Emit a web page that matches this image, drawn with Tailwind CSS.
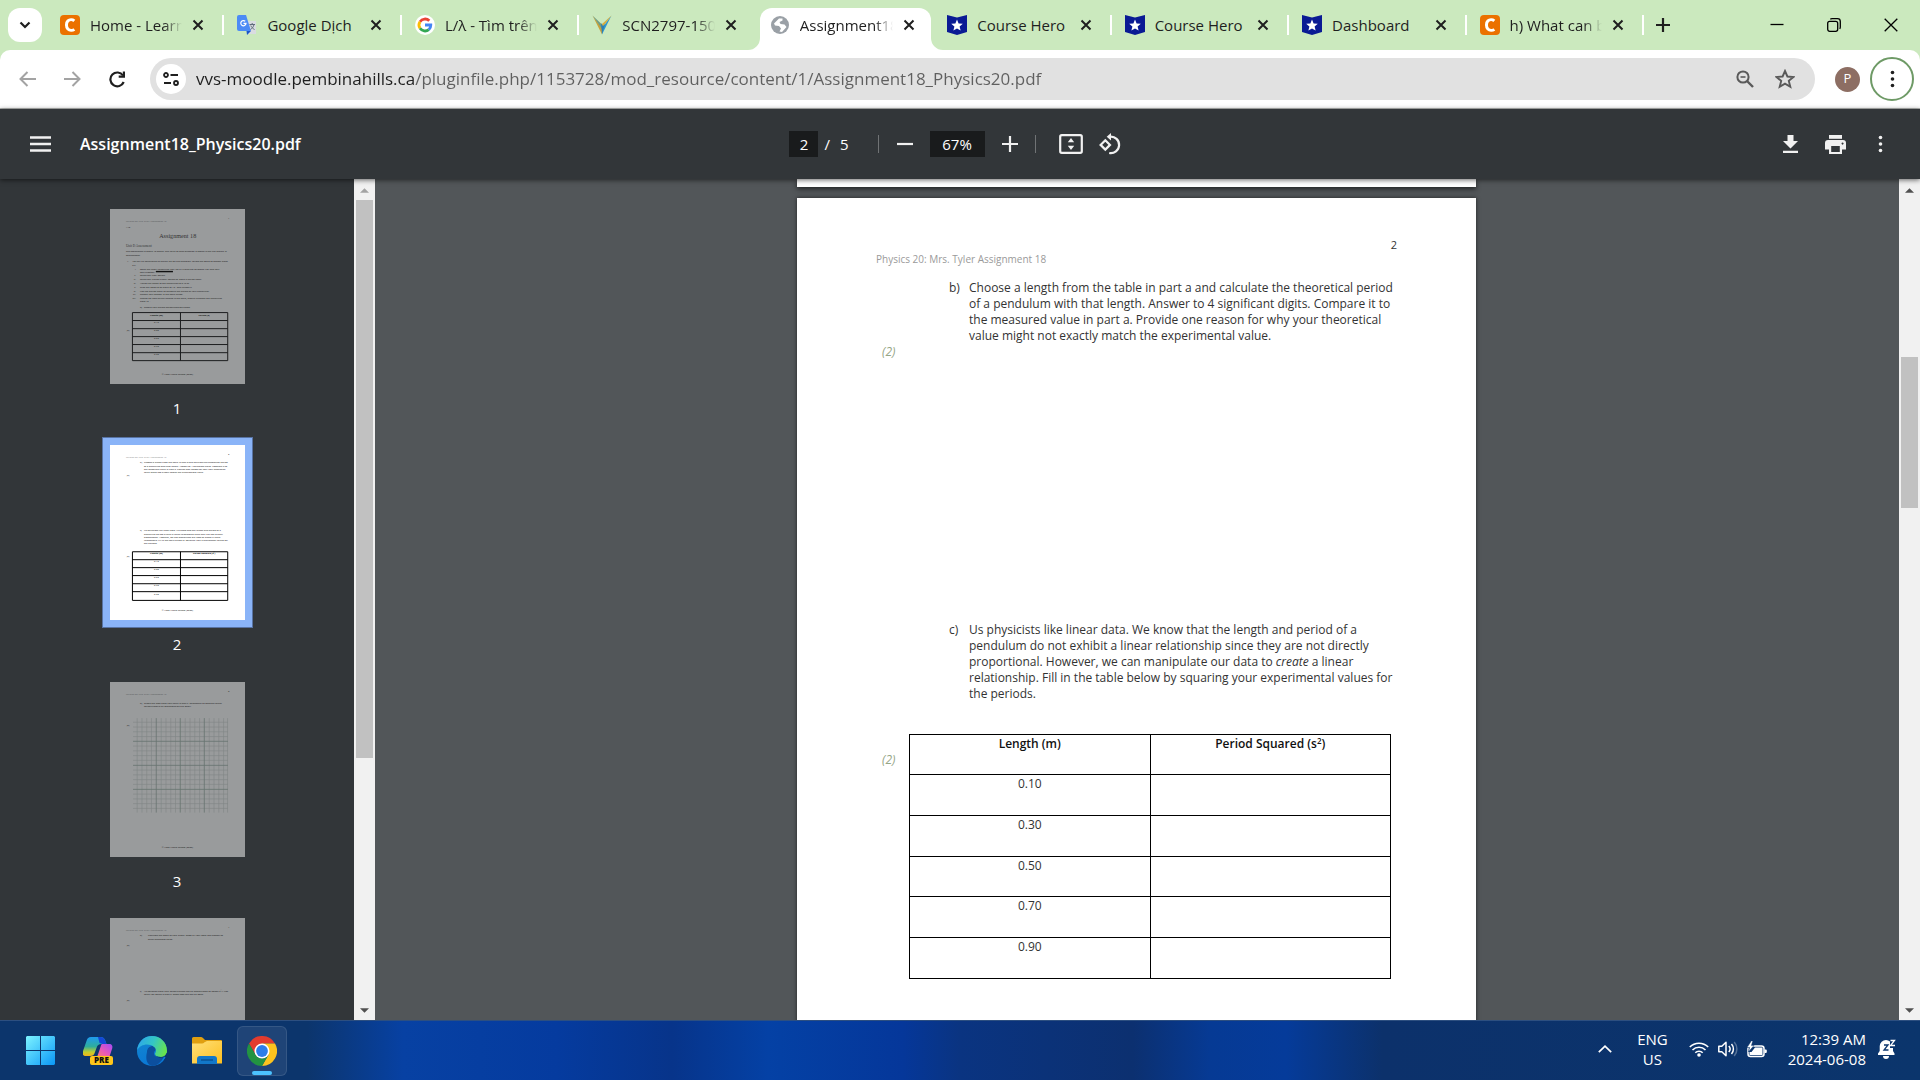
<!DOCTYPE html>
<html lang="en">
<head>
<meta charset="utf-8">
<title>Assignment18_Physics20.pdf</title>
<script src="https://cdn.jsdelivr.net/npm/@tailwindcss/browser@4"></script>
</head>
<body class="flex h-screen flex-col overflow-hidden bg-white font-['Open_Sans','Noto_Sans',sans-serif] text-[#1f1f1f]">

<!-- Shared symbols -->
<svg class="hidden" aria-hidden="true">
  <symbol id="x" viewBox="0 0 12 12"><path d="M1.5 1.5l9 9M10.500 1.500l-9 9" fill="none" stroke="currentColor" stroke-width="2"/></symbol>
  <symbol id="chegg" viewBox="0 0 20 20"><rect width="20" height="20" rx="4" fill="#eb7100"/><path d="M14.300 5.800C12.500 4.300 9.600 4.300 7.900 5.900 6 7.700 6 12 7.900 14c1.700 1.700 4.600 1.800 6.400.3" fill="none" stroke="#fff" stroke-width="3"/></symbol>
  <symbol id="hero" viewBox="0 0 20 20"><path d="M0 0l10 2.500L20 0v17l-10 3-10-3z" fill="#0a1a94"/><path d="M10 4.600l1.600 3.900 4.200.3-3.200 2.700 1 4.100L10 13.400l-3.600 2.200 1-4.100-3.200-2.700 4.200-.3z" fill="#fff"/></symbol>
  <symbol id="up" viewBox="0 0 10 5"><path d="M5 0l5 5H0z" fill="currentColor"/></symbol>
  <symbol id="down" viewBox="0 0 10 5"><path d="M0 0h10L5 5z" fill="currentColor"/></symbol>
  <symbol id="dots" viewBox="0 0 6 22"><circle cx="3" cy="3" r="2.200" fill="currentColor"/><circle cx="3" cy="11" r="2.200" fill="currentColor"/><circle cx="3" cy="19" r="2.200" fill="currentColor"/></symbol>
</svg>

<!-- Tab strip -->
<header class="flex h-[50px] shrink-0 items-center bg-[#cbe9be]">
  <button aria-label="Search tabs" class="ml-2 flex h-[34px] w-[34px] shrink-0 items-center justify-center rounded-xl bg-white"><svg class="h-2 w-3" viewBox="0 0 12 8"><path d="M1.500 1.500L6 6l4.500-4.500" fill="none" stroke="#1f1f1f" stroke-width="2.200"/></svg></button>
  <nav aria-label="Tabs" class="ml-[5px] grid h-[50px] min-w-0 flex-1 grid-cols-9 text-[15px]">
    <div class="flex h-full min-w-0 items-center pl-[13px]">
      <svg class="h-5 w-5 shrink-0"><use href="#chegg"/></svg>
      <a href="#" class="ml-[10px] min-w-0 flex-1 overflow-hidden whitespace-nowrap mask-r-from-80%">Home - Learn</a>
      <button aria-label="Close tab" class="mr-[18px] ml-[10px]"><svg class="h-3 w-3"><use href="#x"/></svg></button>
      <span class="h-5 w-[2px] bg-white"></span>
    </div>
    <div class="flex h-full min-w-0 items-center pl-[13px]">
      <svg class="h-5 w-5 shrink-0" viewBox="0 0 20 20"><path d="M8 6h11v13H11z" fill="#d9dce0"/><path d="M2 0h7l5 16H2a2 2 0 0 1-2-2V2a2 2 0 0 1 2-2z" fill="#4c8bf5"/><path d="M9.500 16H14l-4 4z" fill="#1a56c8"/><path d="M8.200 6.300a2.600 2.600 0 1 0 .8 2.100H6.500" fill="none" stroke="#fff" stroke-width="1.200"/><path d="M12.500 9.500H18M15.200 8v1.500M17 9.500c-.5 2.500-2 4-3.500 5M13.800 10.500c.6 1.700 2 3 3.700 4" fill="none" stroke="#5f6b7a"/></svg>
      <a href="#" class="ml-[10px] min-w-0 flex-1 overflow-hidden whitespace-nowrap">Google Dịch</a>
      <button aria-label="Close tab" class="mr-[18px] ml-[10px]"><svg class="h-3 w-3"><use href="#x"/></svg></button>
      <span class="h-5 w-[2px] bg-white"></span>
    </div>
    <div class="flex h-full min-w-0 items-center pl-[13px]">
      <svg class="h-5 w-5 shrink-0" viewBox="0 0 20 20"><circle cx="10" cy="10" r="10" fill="#fff"/><g fill="none" stroke-width="2.800"><path d="M5 6.700A6 6 0 0 1 14.300 5.800" stroke="#ea4335"/><path d="M5 6.700a6 6 0 0 0 0 6.600" stroke="#fbbc05"/><path d="M5 13.300a6 6 0 0 0 8.800 1.300" stroke="#34a853"/><path d="M13.800 14.600A6 6 0 0 0 15.800 10H10" stroke="#4285f4"/></g></svg>
      <a href="#" class="ml-[10px] min-w-0 flex-1 overflow-hidden whitespace-nowrap mask-r-from-80%">L/λ - Tìm trên</a>
      <button aria-label="Close tab" class="mr-[18px] ml-[10px]"><svg class="h-3 w-3"><use href="#x"/></svg></button>
      <span class="h-5 w-[2px] bg-white"></span>
    </div>
    <div class="flex h-full min-w-0 items-center pl-[13px]">
      <svg class="h-5 w-5 shrink-0" viewBox="0 0 20 20"><path d="M.5.5L10 19.500V13z" fill="#c9a13b"/><path d="M.5.500L10 9.500V14z" fill="#6d9c86"/><path d="M19.500.5L10 19.500V13z" fill="#2f97d1"/><path d="M19.500.500L10 9V13z" fill="#d8ad3e"/><path d="M9 8l1 11 3-10-2 2z" fill="#2f7fae"/></svg>
      <a href="#" class="ml-[10px] min-w-0 flex-1 overflow-hidden whitespace-nowrap mask-r-from-80%">SCN2797-150</a>
      <button aria-label="Close tab" class="mr-5 ml-[10px]"><svg class="h-3 w-3"><use href="#x"/></svg></button>
    </div>
    <div class="h-full min-w-0 px-[3px] pt-2">
      <div class="relative flex h-[42px] items-center rounded-t-xl bg-white pb-2 pl-[10px]">
        <svg class="absolute bottom-0 -left-3 h-3 w-3" viewBox="0 0 12 12"><path d="M12 0v12H0A12 12 0 0 0 12 0z" fill="#fff"/></svg>
        <svg class="absolute -right-3 bottom-0 h-3 w-3" viewBox="0 0 12 12"><path d="M0 0v12h12A12 12 0 0 1 0 0z" fill="#fff"/></svg>
        <svg class="h-5 w-5 shrink-0" viewBox="0 0 20 20"><circle cx="10" cy="10" r="9" fill="#9aa0a6"/><path d="M9 3.500L4 8.500l1 2 4 .5 2 2.500-1.500 3L12 17l4.500-5-2-2.500-4-.5-1-2 3-1.500V3.500z" fill="#fff"/></svg>
        <a href="#" aria-current="page" class="ml-[10px] min-w-0 flex-1 overflow-hidden whitespace-nowrap mask-r-from-80%">Assignment18</a>
        <button aria-label="Close tab" class="mr-4 ml-[10px]"><svg class="h-3 w-3"><use href="#x"/></svg></button>
      </div>
    </div>
    <div class="flex h-full min-w-0 items-center pl-[13px]">
      <svg class="h-5 w-5 shrink-0"><use href="#hero"/></svg>
      <a href="#" class="ml-[10px] min-w-0 flex-1 overflow-hidden whitespace-nowrap">Course Hero</a>
      <button aria-label="Close tab" class="mr-[18px] ml-[10px]"><svg class="h-3 w-3"><use href="#x"/></svg></button>
      <span class="h-5 w-[2px] bg-white"></span>
    </div>
    <div class="flex h-full min-w-0 items-center pl-[13px]">
      <svg class="h-5 w-5 shrink-0"><use href="#hero"/></svg>
      <a href="#" class="ml-[10px] min-w-0 flex-1 overflow-hidden whitespace-nowrap">Course Hero</a>
      <button aria-label="Close tab" class="mr-[18px] ml-[10px]"><svg class="h-3 w-3"><use href="#x"/></svg></button>
      <span class="h-5 w-[2px] bg-white"></span>
    </div>
    <div class="flex h-full min-w-0 items-center pl-[13px]">
      <svg class="h-5 w-5 shrink-0"><use href="#hero"/></svg>
      <a href="#" class="ml-[10px] min-w-0 flex-1 overflow-hidden whitespace-nowrap">Dashboard</a>
      <button aria-label="Close tab" class="mr-[18px] ml-[10px]"><svg class="h-3 w-3"><use href="#x"/></svg></button>
      <span class="h-5 w-[2px] bg-white"></span>
    </div>
    <div class="flex h-full min-w-0 items-center pl-[13px]">
      <svg class="h-5 w-5 shrink-0"><use href="#chegg"/></svg>
      <a href="#" class="ml-[10px] min-w-0 flex-1 overflow-hidden whitespace-nowrap mask-r-from-80%">h) What can b</a>
      <button aria-label="Close tab" class="mr-[18px] ml-[10px]"><svg class="h-3 w-3"><use href="#x"/></svg></button>
      <span class="h-5 w-[2px] bg-white"></span>
    </div>
  </nav>
  <button aria-label="New tab" class="ml-3"><svg class="h-[14px] w-[14px]" viewBox="0 0 14 14"><path d="M7 0v14M0 7h14" stroke="#1f1f1f" stroke-width="2.200"/></svg></button>
  <div class="mr-px ml-[78px] flex shrink-0 text-black">
    <button aria-label="Minimize" class="flex w-[57px] items-center justify-center"><svg class="h-[14px] w-[14px]" viewBox="0 0 14 14"><path d="M.5 6.500h13" stroke="currentColor" stroke-width="1.300"/></svg></button>
    <button aria-label="Restore" class="flex w-[57px] items-center justify-center"><svg class="h-[14px] w-[14px]" viewBox="0 0 14 14"><g fill="none" stroke="currentColor" stroke-width="1.300"><rect x=".7" y="3.300" width="10" height="10" rx="2"/><path d="M3.300 1.200Q4 .7 5 .7h5.500a2.800 2.800 0 0 1 2.800 2.800V9q0 1-.6 1.800"/></g></svg></button>
    <button aria-label="Close" class="flex w-[57px] items-center justify-center"><svg class="h-[14px] w-[14px]" viewBox="0 0 14 14"><path d="M.7.700l12.600 12.600M13.300.7L.7 13.300" stroke="currentColor" stroke-width="1.300"/></svg></button>
  </div>
</header>

<!-- Address bar -->
<div class="h-[59px] shrink-0 border-b border-[#b8bab8] bg-[#cbe9be]">
  <div class="flex h-full items-center rounded-t-[10px] bg-white pr-[6px] pl-[19px]">
    <button aria-label="Back"><svg class="h-4 w-[17px]" viewBox="0 0 17 16"><path d="M17 8H2M8.500 1l-7 7 7 7" fill="none" stroke="#a3a3a3" stroke-width="2"/></svg></button>
    <button aria-label="Forward" class="ml-7"><svg class="h-4 w-[17px]" viewBox="0 0 17 16"><path d="M0 8h15M8.500 1l7 7-7 7" fill="none" stroke="#a3a3a3" stroke-width="2"/></svg></button>
    <button aria-label="Reload" class="ml-7"><svg class="h-[17px] w-[17px]" viewBox="0 0 17 17"><path d="M14.700 11A6.900 6.900 0 1 1 14 4.500" fill="none" stroke="#1f1f1f" stroke-width="2.200"/><path d="M16 .5v6.300H9.700V4.600h4.100V.5z" fill="#1f1f1f"/></svg></button>
    <div class="ml-6 flex h-[42px] min-w-0 flex-1 items-center rounded-full bg-[#e1e1e1] pr-5 pl-[6px]">
      <button aria-label="View site information" class="flex h-[30px] w-[30px] shrink-0 items-center justify-center rounded-full bg-white"><svg class="h-[14px] w-4" viewBox="0 0 16 14"><g fill="none" stroke="#1f1f1f" stroke-width="1.800"><circle cx="3" cy="3" r="2"/><path d="M7.500 3H15M1 11h7"/><circle cx="13" cy="11" r="2"/></g></svg></button>
      <!-- The gradient darkens the host name only -->
      <input aria-label="Address" value="vvs-moodle.pembinahills.ca/pluginfile.php/1153728/mod_resource/content/1/Assignment18_Physics20.pdf" class="ml-[10px] min-w-0 flex-1 bg-[linear-gradient(90deg,#1f1f1f_218px,#5f5f5f_218px)] bg-clip-text text-[17px] text-transparent">
      <button aria-label="Zoom"><svg class="h-[18px] w-[18px]" viewBox="0 0 18 18"><g fill="none" stroke="#5a5a5a"><circle cx="7" cy="7" r="5.600" stroke-width="2"/><path d="M11 11l6 6" stroke-width="2.400"/><path d="M4.500 7h5" stroke-width="1.600"/></g></svg></button>
      <button aria-label="Bookmark this tab" class="ml-[21px]"><svg class="h-5 w-5" viewBox="0 0 20 20"><path d="M10 2l2.400 5.500 6 .5-4.600 3.900 1.500 5.900-5.300-3.200-5.300 3.200 1.500-5.900L1.600 8l6-.5z" fill="none" stroke="#5a5a5a" stroke-width="1.900"/></svg></button>
    </div>
    <button aria-label="Profile" class="ml-5 flex h-[25px] w-[25px] items-center justify-center rounded-full bg-[#8d6e63] text-[13px] text-white">P</button>
    <button aria-label="Menu" class="ml-[10px] flex h-11 w-11 items-center justify-center rounded-full border-2 border-[#6e9a66]"><svg class="h-[18px] w-[5px]"><use href="#dots"/></svg></button>
  </div>
</div>

<!-- PDF viewer toolbar -->
<div class="relative z-10 grid h-[70px] shrink-0 grid-cols-3 items-center bg-[#323639] text-white shadow-[0_1px_5px_rgba(0,0,0,0.6)]">
  <div class="flex items-center pl-[30px]">
    <button aria-label="Menu"><svg class="h-[16px] w-[21px]" viewBox="0 0 21 16"><path d="M0 1.500h21M0 8h21M0 14.500h21" stroke="#f1f1f1" stroke-width="2.400"/></svg></button>
    <span class="ml-[29px] text-[16px] font-semibold">Assignment18_Physics20.pdf</span>
  </div>
  <div class="flex items-center justify-center pr-[10px] text-[15px]">
    <input aria-label="Page number" value="2" class="h-[26px] w-[29px] bg-[#191b1c] text-center text-white">
    <span class="ml-[6px]">/</span><span class="ml-[10px]">5</span>
    <span class="ml-[29px] h-[18px] w-px bg-[#707375]"></span>
    <button aria-label="Zoom out" class="ml-[18px]"><svg class="h-4 w-4" viewBox="0 0 16 16"><path d="M0 8h16" stroke="#f1f1f1" stroke-width="2.200"/></svg></button>
    <input aria-label="Zoom level" value="67%" class="ml-[17px] h-[26px] w-[55px] bg-[#191b1c] text-center text-white">
    <button aria-label="Zoom in" class="ml-[17px]"><svg class="h-4 w-4" viewBox="0 0 16 16"><path d="M0 8h16M8 0v16" stroke="#f1f1f1" stroke-width="2.200"/></svg></button>
    <span class="ml-[17px] h-[18px] w-px bg-[#707375]"></span>
    <button aria-label="Fit to page" class="ml-[23px]"><svg class="h-5 w-6" viewBox="0 0 24 20"><rect x="1.200" y="1.200" width="21.600" height="17.600" rx="1.500" fill="none" stroke="#f1f1f1" stroke-width="2.200"/><path d="M12 4l3.200 4.300H8.800zM12 16l3.200-4.300H8.800z" fill="#f1f1f1"/></svg></button>
    <button aria-label="Rotate" class="ml-4"><svg class="h-[22px] w-[22px]" viewBox="0 0 22 22"><g fill="none" stroke="#f1f1f1" stroke-width="2.200"><path d="M6.300 7.200l4.700 4.700-4.700 4.700-4.700-4.700z"/><path d="M11 3.600a8.300 8.300 0 1 1-.8 16.400"/></g><path d="M12 0v7.400L7.700 3.700z" fill="#f1f1f1"/></svg></button>
  </div>
  <div class="flex items-center justify-end pr-[37px]">
    <button aria-label="Download"><svg class="h-[18px] w-[15px]" viewBox="0 0 15 18"><path d="M4.500 0h6v6H15l-7.500 7.500L0 6h4.500zM0 15.700h15V18H0z" fill="#f1f1f1"/></svg></button>
    <button aria-label="Print" class="ml-[27px]"><svg class="h-[19px] w-[21px]" viewBox="0 0 21 19"><path d="M4 0h13v3.800H4z" fill="#f1f1f1"/><path d="M3 5h15a3 3 0 0 1 3 3v6.500h-4V19H4v-4.500H0V8a3 3 0 0 1 3-3zm3.200 6v6h8.600v-6zM17.500 7.400a1 1 0 1 0 .1 0z" fill="#f1f1f1" fill-rule="evenodd"/></svg></button>
    <button aria-label="More actions" class="ml-8"><svg class="h-[18px] w-[5px] text-[#f1f1f1]"><use href="#dots"/></svg></button>
  </div>
</div>

<div class="flex min-h-0 flex-1 bg-[#525659]">
  <!-- Thumbnails -->
  <aside class="flex w-[354px] shrink-0 flex-col items-center overflow-hidden bg-[#323639] pt-[30px] text-[15px] leading-5 text-white">
    <a href="#" class="flex shrink-0 flex-col items-center">
      <svg class="h-[175px] w-[135px] bg-[#999b9c]" viewBox="0 0 680 880" fill="#111" font-family="Open Sans, sans-serif" font-size="12">
        <text x="80" y="66" fill="#55585a">Physics 20: Mrs. Tyler Assignment 18</text><text x="594" y="52">1</text><text x="80" y="96">/ 43</text>
        <text x="341" y="143" font-family="Liberation Serif, serif" font-size="31" fill="#333" text-anchor="middle">Assignment 18</text>
        <text x="80" y="192" font-family="Liberation Serif, serif" font-size="17" fill="#333">Unit D Assessment</text>
        <text x="80" y="217">The assignment is worth 43 marks. The value of each question is stated in the left margin in</text><text x="80" y="237">parentheses.</text>
        <text x="86" y="267">1.</text><text x="112" y="267">You will be conducting an online lab for this question. Follow the steps to answer parts</text><text x="112" y="287">a-c.</text>
        <text x="126" y="307">i.</text><text x="151" y="307">Open the PhET “Pendulum Lab” lab by typing the following link into your</text><text x="151" y="320">web browser:</text><path d="M231 311h86v7h-86z"/>
        <text x="122" y="338">ii.</text><text x="151" y="338">Select the “Lab” option.</text><text x="119" y="358">iii.</text><text x="151" y="358">Select the “Period Timer” option to insert a period timer.</text>
        <text x="119" y="378">iv.</text><text x="151" y="378">Adjust the length of the pendulum to 0.10 m.</text><text x="122" y="398">v.</text><text x="151" y="398">Drag the mass to an angle of 10° and release it.</text>
        <text x="119" y="418">vi.</text><text x="151" y="418">Use the period timer to measure the period of your pendulum.</text><text x="116" y="433">vii.</text><text x="151" y="433">Record your answer in the table below.</text>
        <text x="113" y="453">viii.</text><text x="151" y="453">Repeat for each of the lengths in the table, always releasing the pendulum</text><text x="151" y="468">from 10°.</text>
        <text x="151" y="497">a)</text><text x="171" y="497">Record your period measurements below.</text>
        <path d="M113 521h480v242H113zM355 521v242M113 561h480M113 602h480M113 642h480M113 682h480M113 723h480" fill="none" stroke="#1b1c1d" stroke-width="5"/>
        <g text-anchor="middle"><text x="234" y="536" font-weight="700">Length (m)</text><text x="474" y="536" font-weight="700">Period (s)</text><text x="234" y="574">0.10</text><text x="234" y="614">0.30</text><text x="234" y="655">0.50</text><text x="234" y="695">0.70</text><text x="234" y="736">0.90</text><text x="339" y="836">© Vista Virtual School (2020)</text></g><text x="84" y="612">(2)</text>
      </svg>
      <span class="mt-[14px]">1</span>
    </a>
    <a href="#" aria-current="page" class="mt-[19px] flex shrink-0 flex-col items-center">
      <span class="border border-[#5873a3] bg-[#8ab4f8] p-[7px]"><svg class="h-[175px] w-[135px] bg-white" viewBox="0 0 680 880" fill="#000" font-family="Open Sans, sans-serif" font-size="12">
        <text x="80" y="66" fill="#888">Physics 20: Mrs. Tyler Assignment 18</text><text x="594" y="52">2</text>
        <text x="151" y="90">b)</text><text x="171" y="90">Choose a length from the table in part a and calculate the theoretical period</text><text x="171" y="109">of a pendulum with that length. Answer to 4 significant digits. Compare it to</text><text x="171" y="125">the measured value in part a. Provide one reason for why your theoretical</text><text x="171" y="140">value might not exactly match the experimental value.</text>
        <text x="84" y="155">(2)</text><text x="84" y="562">(2)</text>
        <text x="151" y="432">c)</text><text x="171" y="432">Us physicists like linear data. We know that the length and period of a</text><text x="171" y="452">pendulum do not exhibit a linear relationship since they are not directly</text><text x="171" y="467">proportional. However, we can manipulate our data to create a linear</text><text x="171" y="482">relationship. Fill in the table below by squaring your experimental values for</text><text x="171" y="497">the periods.</text>
        <path d="M113 537h480v245H113zM355 537v245M113 577h480M113 617h480M113 657h480M113 698h480M113 738h480" fill="none" stroke="#000" stroke-width="5"/>
        <g text-anchor="middle"><text x="234" y="550" font-weight="700">Length (m)</text><text x="474" y="550" font-weight="700">Period Squared (s²)</text><text x="234" y="590">0.10</text><text x="234" y="630">0.30</text><text x="234" y="671">0.50</text><text x="234" y="711">0.70</text><text x="234" y="755">0.90</text><text x="339" y="836">© Vista Virtual School (2020)</text></g>
      </svg></span>
      <span class="mt-[6px]">2</span>
    </a>
    <a href="#" class="mt-7 flex shrink-0 flex-col items-center">
      <svg class="h-[175px] w-[135px] bg-[#999b9c]" viewBox="0 0 680 880" fill="#111" font-family="Open Sans, sans-serif" font-size="12">
        <text x="80" y="66" fill="#55585a">Physics 20: Mrs. Tyler Assignment 18</text><text x="594" y="52">3</text>
        <text x="151" y="110">d)</text><text x="171" y="110">Graph the data from your table in part c. Remember to consider which</text><text x="171" y="126">variable would be dependent on the other.</text><text x="84" y="222">(2)</text>
        <path d="M137 181v476M161 181v476M185 181v476M209 181v476M258 181v476M282 181v476M306 181v476M330 181v476M379 181v476M403 181v476M427 181v476M451 181v476M500 181v476M524 181v476M548 181v476M572 181v476M592 181v476M116 202h478M116 226h478M116 250h478M116 274h478M116 322h478M116 346h478M116 370h478M116 394h478M116 443h478M116 467h478M116 491h478M116 515h478M116 564h478M116 588h478M116 612h478M116 636h478" fill="none" stroke="#808586" stroke-width="3"/>
        <path d="M233 181v476M354 181v476M475 181v476M116 298h478M116 419h478M116 540h478" fill="none" stroke="#66736f" stroke-width="4"/>
        <text x="339" y="836" text-anchor="middle">© Vista Virtual School (2020)</text>
      </svg>
      <span class="mt-[14px]">3</span>
    </a>
    <a href="#" aria-label="Page 4" class="mt-[27px] flex shrink-0 flex-col items-center">
      <svg class="h-[175px] w-[135px] bg-[#999b9c]" viewBox="0 0 680 880" fill="#111" font-family="Open Sans, sans-serif" font-size="12">
        <text x="80" y="66" fill="#55585a">Physics 20: Mrs. Tyler Assignment 18</text><text x="594" y="52">4</text>
        <text x="151" y="90">e)</text><text x="191" y="90">Calculate the slope of your graph. Show all your work and answer to</text><text x="191" y="110">three significant digits.</text><text x="84" y="141">(2)</text>
        <text x="151" y="372">f)</text><text x="171" y="372">An equation from your formula sheet can be manipulated to isolate T²/l. Use</text><text x="171" y="387">value you found in part e. Show how this can be done.</text><text x="84" y="418">(2)</text>
      </svg>
    </a>
  </aside>
  <div class="flex w-[21px] shrink-0 flex-col items-center bg-[#f1f1f1] pb-[7px]">
    <svg class="mt-[9px] h-[5px] w-[9px] text-[#a3a3a3]"><use href="#up"/></svg>
    <span class="mt-[7px] w-[17px] flex-[557] bg-[#c1c1c1]"></span>
    <span class="flex-[250]"></span>
    <svg class="h-[5px] w-[9px] text-[#505050]"><use href="#down"/></svg>
  </div>

  <!-- Document -->
  <main class="flex min-w-0 flex-1 flex-col items-center overflow-hidden pr-[1px] text-[12px] leading-4 text-[#333]">
    <div class="h-2 w-[679px] shrink-0 bg-white shadow-[0_2px_5px_rgba(0,0,0,0.6)]"></div>
    <article class="mt-[11px] h-[879px] w-[679px] shrink-0 bg-white pt-[39px] pr-[79px] pl-[79px] shadow-[0_0_4px_rgba(0,0,0,0.6)]">
      <p class="text-right text-[11px]">2</p>
      <p class="-mt-[2px] text-[10px] font-medium text-[#9a9a9a]">Physics 20: Mrs. Tyler Assignment 18</p>
      <div class="mt-[13px] flex whitespace-nowrap">
        <p class="flex w-[73px] items-end pl-[6px] text-[#95a586] italic"><span class="-mb-4">(2)</span></p>
        <p class="w-5">b)</p>
        <p>Choose a length from the table in part a and calculate the theoretical period<br>of a pendulum with that length. Answer to 4 significant digits. Compare it to<br>the measured value in part a. Provide one reason for why your theoretical<br>value might not exactly match the experimental value.</p>
      </div>
      <div class="mt-[278px] flex pl-[73px] whitespace-nowrap">
        <p class="w-5">c)</p>
        <p>Us physicists like linear data. We know that the length and period of a<br>pendulum do not exhibit a linear relationship since they are not directly<br>proportional. However, we can manipulate our data to <em>create</em> a linear<br>relationship. Fill in the table below by squaring your experimental values for<br>the periods.</p>
      </div>
      <div class="mt-8 flex">
        <p class="w-[33px] shrink-0 pt-[18px] pl-[6px] text-[#95a586] italic">(2)</p>
        <table class="-mr-3 h-[245px] w-[482px] shrink-0 table-fixed border-collapse text-center [&_td]:border [&_td]:border-black [&_td]:pt-px [&_td]:align-top [&_th]:border [&_th]:border-black [&_th]:pt-px [&_th]:align-top [&_th]:font-semibold [&_th]:text-[#111]">
          <thead><tr class="h-10"><th>Length (m)</th><th>Period Squared (s<sup class="text-[8px]">2</sup>)</th></tr></thead>
          <tbody>
            <tr class="h-10"><td>0.10</td><td></td></tr>
            <tr class="h-10"><td>0.30</td><td></td></tr>
            <tr class="h-10"><td>0.50</td><td></td></tr>
            <tr class="h-10"><td>0.70</td><td></td></tr>
            <tr class="h-10"><td>0.90</td><td></td></tr>
          </tbody>
        </table>
      </div>
    </article>
  </main>
  <div class="flex w-[21px] shrink-0 flex-col items-center bg-[#f1f1f1] pb-[7px] text-[#505050]">
    <svg class="mt-[9px] h-[5px] w-[9px]"><use href="#up"/></svg>
    <span class="flex-[164]"></span>
    <span class="w-[17px] flex-[151] bg-[#c1c1c1]"></span>
    <span class="flex-[500]"></span>
    <svg class="h-[5px] w-[9px]"><use href="#down"/></svg>
  </div>
</div>

<!-- Taskbar -->
<footer class="flex h-[60px] shrink-0 items-center border-t border-[#2d4f80] bg-[linear-gradient(90deg,#0c356c_0%,#0c356c_16%,#0741a3_21%,#053b9f_29%,#07348a_35%,#0441a5_40%,#05379a_47%,#0a3481_50%,#0c3070_59%,#063a94_63%,#053b9a_67%,#0c316b_72%,#0b356c_100%)] pr-6 pl-[26px] text-white">
  <button aria-label="Start"><svg class="h-[29px] w-[29px]" viewBox="0 0 29 29"><defs><linearGradient id="win" x1="0" y1="0" x2="29" y2="29" gradientUnits="userSpaceOnUse"><stop stop-color="#7df3ff"/><stop offset="1" stop-color="#0a97f7"/></linearGradient></defs><path d="M1 0h13v14H0V1zM15 0h13l1 1v13H15zM0 15h14v14H1l-1-1zM15 15h14v13l-1 1H15z" fill="url(#win)"/></svg></button>
  <button aria-label="Copilot" class="ml-7"><svg class="h-[29px] w-[30px]" viewBox="0 0 30 29"><defs><linearGradient id="cpa" x1="0" y1="0" x2="0" y2="1"><stop stop-color="#1f9af0"/><stop offset=".5" stop-color="#2fae9c"/><stop offset=".8" stop-color="#c5cf2c"/><stop offset="1" stop-color="#f2b21b"/></linearGradient><linearGradient id="cpb" x1="1" y1="0" x2="0" y2="1"><stop stop-color="#a54af5"/><stop offset=".5" stop-color="#e958b8"/><stop offset="1" stop-color="#ff8a5c"/></linearGradient></defs><path d="M8 1h9c3 0 4 1 5 3l1.500 4h-5c-3 0-4 1-5 4l-1.500 4c-1 3-2 4-5 4H3c-3 0-4-2-3-5L3.500 5C4.500 2 5.500 1 8 1z" fill="url(#cpa)"/><path d="M15 1h2c3 0 4 1 5 3l1.500 4h-4l-3-1z" fill="#1447d6"/><path d="M19 8h7c3 0 4 2 3 5l-3 9H11c3 0 3.500-2 4.500-5l2-6c.5-2 1-3 1.500-3z" fill="url(#cpb)"/><rect x="7" y="20" width="23" height="9" rx="2" fill="#ffc61a"/><text x="18.500" y="27.300" text-anchor="middle" font-family="Open Sans, sans-serif" font-size="8" font-weight="800" fill="#111">PRE</text></svg></button>
  <button aria-label="Edge" class="ml-6"><svg class="h-[30px] w-[30px]" viewBox="0 0 30 30"><defs><linearGradient id="eda" x1="0" y1=".3" x2="1" y2=".6"><stop stop-color="#2da6ea"/><stop offset=".5" stop-color="#34c6c4"/><stop offset="1" stop-color="#69e34a"/></linearGradient><linearGradient id="edb" x1="0" y1="0" x2=".3" y2="1"><stop stop-color="#1487cf"/><stop offset="1" stop-color="#0a78d6"/></linearGradient></defs><circle cx="15" cy="15" r="15" fill="url(#edb)"/><path d="M10 16c0-4 3-6 6-6 2 0 3 1 3 3 0 1-2 2-2 4 0 4 5 6 10 3.500C24 27 19 30 15 30 8 28 9 20 10 16z" fill="#0c4f9e"/><path d="M30 15c0 4-3 6-6 6-4 0-6-1-6-3 0-1 1-1.500 1-3.500 0-3-4-6-9-6-4 0-8 2-10 6C1 6 7 0 15 0s15 6 15 15z" fill="url(#eda)"/><path d="M18 18c0 3 5 5 9 3 1-.5 2 0 1.500 1-.5.700-1 1.500-1.500 2l6 6V18l-3.500-1c-1 3-3.500 4-5.500 4-4 0-6-1-6-3z" fill="#0c346c"/></svg></button>
  <button aria-label="File Explorer" class="ml-[25px]"><svg class="h-[28px] w-[30px]" viewBox="0 0 30 28"><defs><linearGradient id="fol" x1="0" y1="0" x2="1" y2="1"><stop stop-color="#ffe07a"/><stop offset="1" stop-color="#fdbf1f"/></linearGradient></defs><path d="M0 1.500Q0 0 1.500 0H9q1 0 2 1l2 2h16q1 0 1 1v6H0z" fill="#e09f10"/><path d="M0 6.500h10q1.500 0 2.500-1.200L15 4h15v22.500H0z" fill="url(#fol)"/><path d="M5 27v-5q0-3 3-3h14q3 0 3 3v5z" fill="#1277c9"/><path d="M9 23h12" stroke="#0a4f91" stroke-width="1.400"/></svg></button>
  <button aria-label="Chrome" class="ml-[15px] flex h-[50px] w-[50px] flex-col items-center rounded-md border border-white/10 bg-white/8 pt-[9px]"><svg class="h-[30px] w-[30px]" viewBox="0 0 30 30"><path d="M2 7.500A15 15 0 0 1 28 7.500H15L8.500 18.800z" fill="#e23b2e"/><path d="M28 7.500A15 15 0 0 1 15 30l6.500-11.300L15 7.500z" fill="#fcc31e"/><path d="M15 30A15 15 0 0 1 2 7.500l6.500 11.300A7.500 7.500 0 0 0 21.500 18.700z" fill="#229342"/><circle cx="15" cy="15" r="7.500" fill="#fff"/><circle cx="15" cy="15" r="5.900" fill="#2b7de9"/></svg><span class="mt-[5px] h-1 w-5 shrink-0 rounded-full bg-[#4cc2ff]"></span></button>
  <div class="ml-auto flex items-center pb-[3px] text-[15px] leading-5">
    <button aria-label="Show hidden icons"><svg class="h-2 w-[14px]" viewBox="0 0 14 8"><path d="M.8 7.200L7 1.200l6.200 6" fill="none" stroke="#fff" stroke-width="1.700"/></svg></button>
    <button aria-label="Input language" class="ml-[25px] text-center">ENG<br>US</button>
    <button aria-label="Network, sound and battery" class="ml-[21px] flex items-center gap-[9px]">
      <svg class="h-4 w-5" viewBox="0 0 20 16"><g fill="none" stroke="#fff" stroke-width="1.600"><path d="M.8 6a13 13 0 0 1 18.400 0M3.500 9a9.200 9.200 0 0 1 13 0M6.300 11.800a5.200 5.200 0 0 1 7.400 0"/></g><circle cx="10" cy="14" r="1.800" fill="#fff"/></svg>
      <svg class="h-4 w-5" viewBox="0 0 20 16"><g fill="none" stroke="#fff" stroke-width="1.500"><path d="M.8 5.300h3L8 1.300v13.400l-4.200-4h-3z" stroke-linejoin="round"/><path d="M10.800 5a4.500 4.500 0 0 1 0 6M13.500 3a7.500 7.500 0 0 1 0 10"/><path d="M16.200 1a10.500 10.500 0 0 1 0 14" stroke-opacity=".3"/></g></svg>
      <svg class="h-[17px] w-5" viewBox="0 0 20 17"><rect x="1" y="5" width="16" height="10.500" rx="2.500" fill="none" stroke="#fff" stroke-width="1.500"/><path d="M8 6.500h7.500V14H2.500v-3h2zM17.500 8.500h1.300q1 0 1 1v1.500q0 1-1 1h-1.300z" fill="#fff"/><path d="M4.500-.5L0 6.500h2.500L1.500 11 7 4.500H4.500L6-.5z" fill="#fff" stroke="#0b356c" stroke-width=".6"/></svg>
    </button>
    <button aria-label="Clock" class="ml-[21px] text-right">12:39 AM<br>2024-06-08</button>
    <button aria-label="Notifications" class="ml-3"><svg class="h-5 w-[18px]" viewBox="0 0 18 20"><path d="M8 1a6.300 6.300 0 0 1 4 1.500V9h3v3l1.500 2.500V16H0v-1.500L1.700 12V7A6.300 6.300 0 0 1 8 1zM5 17h6a3 3 0 0 1-6 0z" fill="#fff"/><path d="M6 6h4l-4 5h4.500" fill="none" stroke="#0b356c" stroke-width="1.300"/><path d="M12.500 1.500h4l-4 5h4.500" fill="none" stroke="#fff" stroke-width="1.300"/></svg></button>
  </div>
</footer>
</body>
</html>
